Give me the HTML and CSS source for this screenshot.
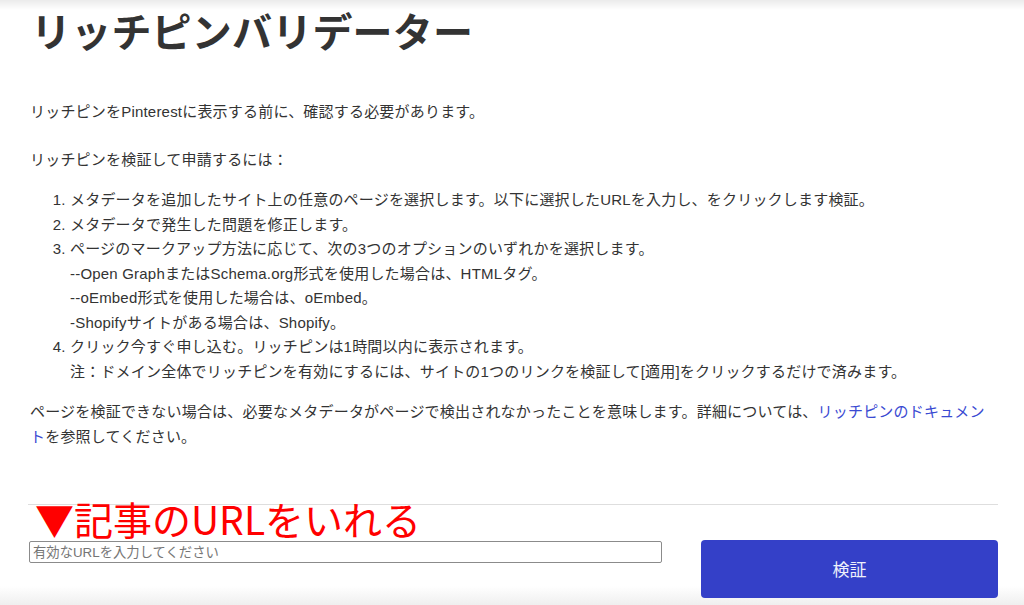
FILE: index.html
```html
<!DOCTYPE html>
<html lang="ja">
<head>
<meta charset="utf-8">
<title>リッチピンバリデーター</title>
<link rel="stylesheet" href="styles.css">
</head>
<body>
<main class="page">
  <h1 class="title">リッチピンバリデーター</h1>
  <p class="intro">リッチピンをPinterestに表示する前に、確認する必要があります。</p>
  <p class="lead">リッチピンを検証して申請するには：</p>
  <ol class="steps">
    <li>メタデータを追加したサイト上の任意のページを選択します。以下に選択したURLを入力し、をクリックします検証。</li>
    <li>メタデータで発生した問題を修正します。</li>
    <li>ページのマークアップ方法に応じて、次の3つのオプションのいずれかを選択します。<br>--Open GraphまたはSchema.org形式を使用した場合は、HTMLタグ。<br>--oEmbed形式を使用した場合は、oEmbed。<br>-Shopifyサイトがある場合は、Shopify。</li>
    <li>クリック今すぐ申し込む。リッチピンは1時間以内に表示されます。<br>注：ドメイン全体でリッチピンを有効にするには、サイトの1つのリンクを検証して[適用]をクリックするだけで済みます。</li>
  </ol>
  <p class="note">ページを検証できない場合は、必要なメタデータがページで検出されなかったことを意味します。詳細については、<a class="doc-link" href="#">リッチピンのドキュメント</a>を参照してください。</p>
  <form class="check" onsubmit="return false">
    <hr class="rule">
    <div class="annotation">▼記事のURLをいれる</div>
    <div class="row">
      <input class="url" type="text" placeholder="有効なURLを入力してください">
      <button class="verify" type="button">検証</button>
    </div>
  </form>
</main>
</body>
</html>
```

FILE: styles.css
```css
html, body {
  margin: 0;
  padding: 0;
}
body {
  min-height: 605px;
  background: linear-gradient(to bottom, #ebebeb 0, #ffffff 10px, #ffffff 586px, #efefef 605px);
  font-family: "Liberation Sans", "Noto Sans CJK JP", sans-serif;
  color: #333333;
  overflow: hidden;
}
.page {
  width: 968px;
  padding: 0 26px 0 30px;
  box-sizing: content-box;
}
.title {
  margin: 6px 0 0 1px;
  font-size: 40px;
  line-height: 48px;
  font-weight: 700;
  letter-spacing: 0.2px;
  color: #333333;
  font-family: "Noto Sans CJK JP", sans-serif;
}
.intro, .lead, .note, .steps {
  font-size: 15px;
  line-height: 24.5px;
  letter-spacing: 0.2px;
}
.intro {
  margin: 46px 0 0;
}
.lead {
  margin: 23.5px 0 0;
}
.steps {
  margin: 15.5px 0 0;
  padding-left: 40px;
}
.note {
  margin: 16px 0 0;
  max-width: 966px;
}
.doc-link {
  color: #3a4ad2;
  text-decoration: none;
}
.check {
  position: relative;
  margin-top: 55px;
}
.rule {
  margin: 0 0 0 -2px;
  border: 0;
  border-top: 1px solid #dedede;
  height: 0;
}
.annotation {
  position: absolute;
  left: 5px;
  top: -11px;
  font-family: "Noto Sans CJK JP", sans-serif;
  font-size: 39px;
  line-height: 50px;
  color: #ff0000;
  white-space: nowrap;
}
.row {
  display: flex;
  align-items: flex-start;
  gap: 39px;
  margin-top: 35px;
}
.url {
  width: 633px;
  height: 22px;
  box-sizing: border-box;
  margin: 1px 0 0 -1px;
  padding: 1px 3px;
  border: 1px solid #8b8b8b;
  border-radius: 2px;
  font-family: "Liberation Sans", "Noto Sans CJK JP", sans-serif;
  font-size: 13.33px;
  color: #333;
  background: #fff;
}
.url::placeholder {
  color: #757575;
}
.verify {
  width: 297px;
  height: 58px;
  border: 0;
  border-radius: 4px;
  background: #3440c8;
  color: #eef0fb;
  font-family: "Noto Sans CJK JP", sans-serif;
  font-size: 17px;
  line-height: 1;
  padding: 0 0 2px;
}
```
